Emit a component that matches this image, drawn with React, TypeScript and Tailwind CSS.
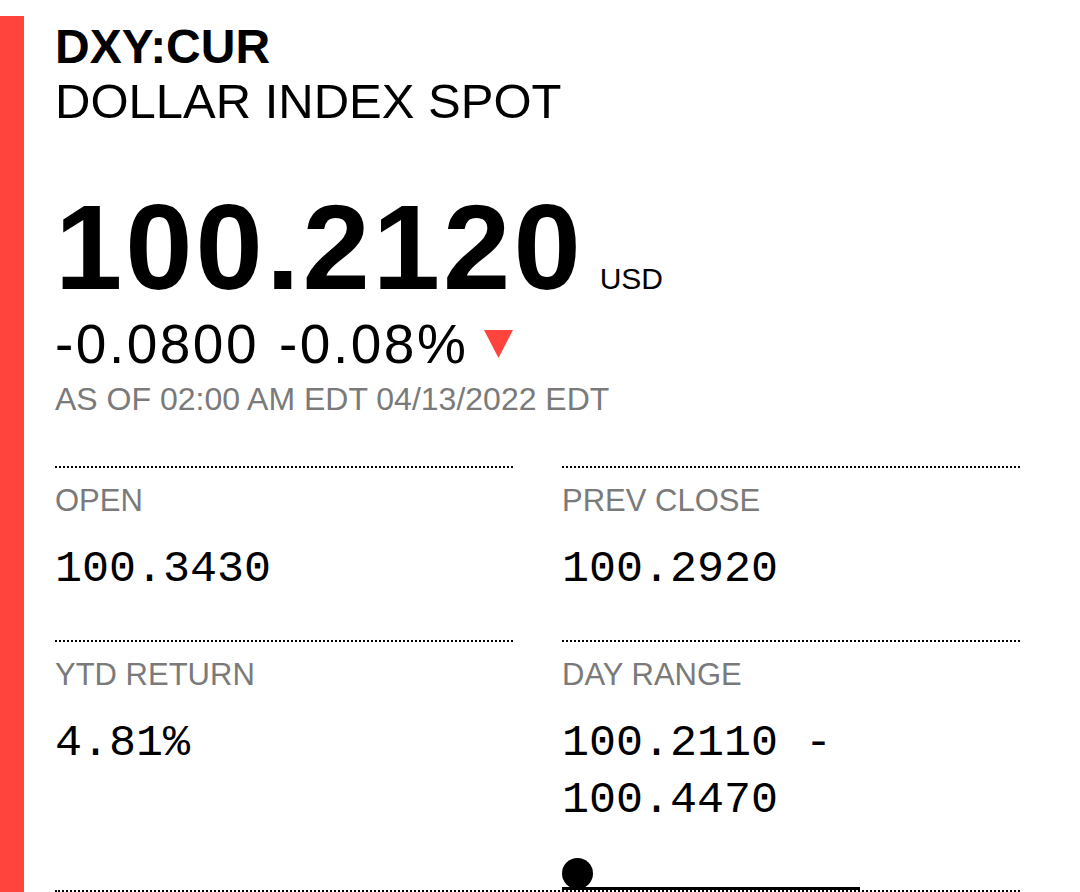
import { ReactNode } from 'react'

const sans = 'font-["Liberation_Sans",Arial,sans-serif]'
const mono = 'font-["Liberation_Mono","Courier_New",monospace]'

function Stat({ label, children }: { label: string; children: ReactNode }) {
  return (
    <div className="border-t-2 border-dotted border-black pt-[13px]">
      <div className={`${sans} text-[31px] leading-[40px] text-[#7a7a7a]`}>{label}</div>
      <div className={`${mono} mt-[20px] text-[45px] leading-[57px] text-black`}>{children}</div>
    </div>
  )
}

export default function App() {
  return (
    <div className="flex min-h-[892px] w-[1080px] overflow-hidden bg-white">
      <div className="mt-[16px] w-[24px] shrink-0 bg-[#ff433d]" />
      <div className={`${sans} flex-1 pl-[31px] pr-[60px] pt-[20px] text-black`}>
        <div className="text-[48px] font-bold leading-[54px]">DXY:CUR</div>
        <div className="text-[49px] leading-[54px]">DOLLAR INDEX SPOT</div>

        <div className="mt-[59px] flex items-baseline gap-[16px]">
          <span className="text-[121px] font-bold leading-[120px] tracking-[3px]">100.2120</span>
          <span className="text-[30px] leading-[30px]">USD</span>
        </div>

        <div className="mt-[7px] flex items-baseline text-[55px] leading-[60px] tracking-[2.5px]">
          <span>-0.0800</span>
          <span className="ml-[20px]">-0.08%</span>
          <svg className="ml-[16px] h-[28px] w-[29px] self-center" viewBox="0 0 29 28">
            <polygon points="0,0 29,0 14.5,28" fill="#ff433d" />
          </svg>
        </div>

        <div className="mt-[5px] text-[32px] leading-[40px] text-[#7a7a7a]">AS OF 02:00 AM EDT 04/13/2022 EDT</div>

        <div className="mt-[47px] grid grid-cols-2 gap-x-[49px]">
          <div className="h-[174px]">
            <Stat label="OPEN">100.3430</Stat>
          </div>
          <div className="h-[174px]">
            <Stat label="PREV CLOSE">100.2920</Stat>
          </div>
          <div>
            <Stat label="YTD RETURN">4.81%</Stat>
          </div>
          <div>
            <Stat label="DAY RANGE">
              100.2110 -
              <br />
              100.4470
            </Stat>
            <div className="mt-[29px] flex w-[298px] items-end">
              <div className="relative h-[32px] w-full border-b-[3px] border-black">
                <div className="absolute bottom-[-2px] left-0 h-[31px] w-[31px] rounded-full bg-black" />
              </div>
            </div>
          </div>
        </div>
        <div className="border-t-2 border-dotted border-black" />
      </div>
    </div>
  )
}
